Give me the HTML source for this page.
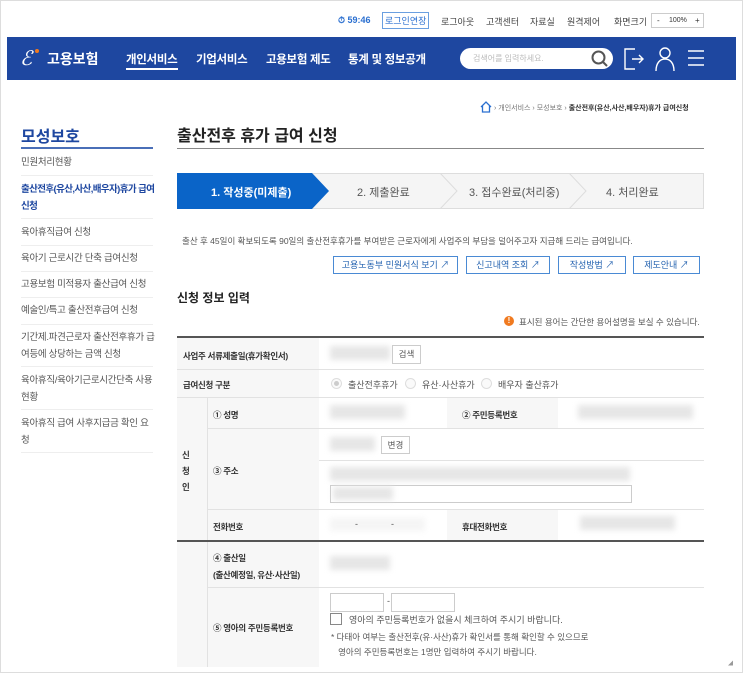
<!DOCTYPE html>
<html><head><meta charset="utf-8"><style>
*{margin:0;padding:0;box-sizing:border-box}
body{width:743px;height:673px;overflow:hidden;background:#fff;font-family:"Liberation Sans","Noto Sans CJK KR",sans-serif;color:#333;position:relative}
.a{position:absolute;white-space:nowrap}
.frame{position:absolute;left:0;top:0;width:743px;height:673px;border:1px solid #ddd}
.top{font-size:9px;color:#444;top:15px}
.nav{left:7px;top:37px;width:729px;height:43px;background:#1e47a0}
.nav .m{color:#fff;font-size:11.5px;font-weight:bold;top:14px;letter-spacing:-0.3px}
.side{font-size:9.5px;color:#555;left:21px;line-height:17px;width:134px;white-space:normal;letter-spacing:-0.3px}
.sl{position:absolute;left:21px;width:132px;height:1px;background:#eee}
.lab{background:#f7f7f7}
.t{font-size:8.5px;font-weight:bold;color:#333;letter-spacing:-0.3px}
.blur{position:absolute;background:#e6e6e6;filter:blur(3px)}
.btn{position:absolute;border:1px solid #4a8ad4;color:#2563b0;font-size:9px;height:18px;line-height:16px;text-align:center}
.box{position:absolute;border:1px solid #ccc;background:#fff}
.hl{position:absolute;height:1px;background:#e2e2e2}
.rad{position:absolute;width:11px;height:11px;border:1px solid #ddd;border-radius:50%;background:#fafafa}
.v{font-size:9px;color:#555}
</style></head><body>
<div class="frame"></div>
<div class="a top" style="left:338px;color:#2a6fd0;font-weight:bold">⏱ 59:46</div>
<div class="a top" style="left:382px;top:12px;border:1px solid #6a9fe0;color:#2a6fd0;padding:1px 2px">로그인연장</div>
<div class="a top" style="left:441px">로그아웃</div>
<div class="a top" style="left:486px">고객센터</div>
<div class="a top" style="left:530px">자료실</div>
<div class="a top" style="left:567px">원격제어</div>
<div class="a top" style="left:614px">화면크기</div>
<div class="a" style="left:651px;top:13px;width:53px;height:15px;border:1px solid #ccc;font-size:8px;line-height:13px;color:#333"><span style="position:absolute;left:5px">-</span><span style="position:absolute;left:17px;font-size:7px">100%</span><span style="position:absolute;left:43px">+</span></div>
<div class="a nav">
 <div class="a" style="left:13px;top:9px;color:#fff;font-size:20px;font-style:italic">ℰ</div>
 <div class="a" style="left:28px;top:12px;width:4px;height:4px;border-radius:50%;background:#f07a20"></div>
 <div class="a" style="left:40px;top:12px;color:#fff;font-size:14px;font-weight:bold">고용보험</div>
 <div class="a m" style="left:119px">개인서비스</div>
 <div class="a" style="left:119px;top:31px;width:52px;height:2px;background:#fff"></div>
 <div class="a m" style="left:189px">기업서비스</div>
 <div class="a m" style="left:259px">고용보험 제도</div>
 <div class="a m" style="left:341px">통계 및 정보공개</div>
 <div class="a" style="left:453px;top:11px;width:153px;height:21px;border-radius:11px;background:#fff"></div>
 <div class="a" style="left:466px;top:16px;font-size:8px;color:#bbb">검색어를 입력하세요.</div>
 <svg class="a" style="left:583px;top:12px" width="20" height="20" viewBox="0 0 20 20"><circle cx="8.5" cy="8.5" r="6" fill="none" stroke="#555" stroke-width="2"/><path d="M13 13l4 4" stroke="#555" stroke-width="2"/></svg>
 <svg class="a" style="left:616px;top:10px" width="22" height="24" viewBox="0 0 22 24" fill="none" stroke="#fff" stroke-width="1.4"><path d="M12 2H2v20h10M9 12h11M16 8l4 4-4 4"/></svg>
 <svg class="a" style="left:648px;top:9px" width="20" height="26" viewBox="0 0 20 26" fill="none" stroke="#fff" stroke-width="1.4"><circle cx="10" cy="7" r="5"/><path d="M1 25c0-8 4-12 9-12s9 4 9 12"/></svg>
 <svg class="a" style="left:680px;top:12px" width="18" height="18" viewBox="0 0 18 18" stroke="#fff" stroke-width="1.4"><path d="M1 2h16M1 9h16M1 16h16"/></svg>
</div>
<svg class="a" style="left:480px;top:101px" width="12" height="12" viewBox="0 0 12 12" fill="none" stroke="#2a6fd0" stroke-width="1.3"><path d="M1 6L6 1l5 5M2.5 5v6h7V5"/></svg>
<div class="a" style="left:494px;top:103px;font-size:7px;color:#777">› 개인서비스 › 모성보호 › <b style="color:#333">출산전후(유산,사산,배우자)휴가 급여신청</b></div>
<div class="a" style="left:21px;top:123px;font-size:16px;font-weight:bold;color:#1e47a0">모성보호</div>
<div class="a" style="left:21px;top:147px;width:132px;height:2px;background:#4a6fb8"></div>
<div class="a side" style="top:154px">민원처리현황</div><div class="sl" style="top:175px"></div>
<div class="a side" style="top:181px;color:#1e47a0;font-weight:bold;letter-spacing:-0.6px">출산전후(유산,사산,배우자)휴가 급여신청</div><div class="sl" style="top:218px"></div>
<div class="a side" style="top:224px">육아휴직급여 신청</div><div class="sl" style="top:245px"></div>
<div class="a side" style="top:250px">육아기 근로시간 단축 급여신청</div><div class="sl" style="top:271px"></div>
<div class="a side" style="top:276px">고용보험 미적용자 출산급여 신청</div><div class="sl" style="top:297px"></div>
<div class="a side" style="top:302px">예술인/특고 출산전후급여 신청</div><div class="sl" style="top:324px"></div>
<div class="a side" style="top:329px">기간제.파견근로자 출산전후휴가 급여등에 상당하는 금액 신청</div><div class="sl" style="top:366px"></div>
<div class="a side" style="top:372px">육아휴직/육아기근로시간단축 사용 현황</div><div class="sl" style="top:409px"></div>
<div class="a side" style="top:415px">육아휴직 급여 사후지급금 확인 요청</div><div class="sl" style="top:452px"></div>
<div class="a" style="left:177px;top:122px;font-size:16px;font-weight:bold;color:#222">출산전후 휴가 급여 신청</div>
<div class="a" style="left:177px;top:148px;width:527px;height:1px;background:#888"></div>
<div class="a" style="left:177px;top:173px;width:527px;height:36px;background:#f5f5f5;border:1px solid #ddd"></div>
<svg class="a" style="left:177px;top:173px" width="527" height="36"><path d="M0 0H135L152 18L135 36H0Z" fill="#0a64c8"/><path d="M263 0L280 18L263 36M392 0L409 18L392 36" fill="none" stroke="#ddd"/></svg>
<div class="a" style="left:211px;top:184px;font-size:11px;color:#fff;font-weight:bold">1. 작성중(미제출)</div>
<div class="a" style="left:357px;top:184px;font-size:11px;color:#555">2. 제출완료</div>
<div class="a" style="left:469px;top:184px;font-size:11px;color:#555">3. 접수완료(처리중)</div>
<div class="a" style="left:606px;top:184px;font-size:11px;color:#555">4. 처리완료</div>
<div class="a" style="left:182px;top:235px;font-size:8.5px;color:#555">출산 후 45일이 확보되도록 90일의 출산전후휴가를 부여받은 근로자에게 사업주의 부담을 덜어주고자 지급해 드리는 급여입니다.</div>
<div class="btn" style="left:333px;top:256px;width:125px">고용노동부 민원서식 보기 ↗</div>
<div class="btn" style="left:466px;top:256px;width:84px">신고내역 조회 ↗</div>
<div class="btn" style="left:558px;top:256px;width:68px">작성방법 ↗</div>
<div class="btn" style="left:633px;top:256px;width:67px">제도안내 ↗</div>
<div class="a" style="left:177px;top:289px;font-size:12px;font-weight:bold;color:#222">신청 정보 입력</div>
<div class="a" style="left:504px;top:316px;width:10px;height:10px;border-radius:50%;background:#f07a20;color:#fff;font-size:8px;line-height:10px;text-align:center;font-weight:bold">!</div>
<div class="a" style="left:519px;top:316px;font-size:8.5px;color:#555">표시된 용어는 간단한 용어설명을 보실 수 있습니다.</div>
<div class="a lab" style="left:177px;top:337px;width:142px;height:330px"></div>
<div class="a" style="left:207px;top:397px;width:112px;height:270px;background:#f7f7f7;border-left:1px solid #e2e2e2"></div>
<div class="a lab" style="left:447px;top:397px;width:111px;height:31px"></div>
<div class="a lab" style="left:447px;top:509px;width:111px;height:32px"></div>
<div class="a" style="left:177px;top:336px;width:527px;height:2px;background:#555"></div>
<div class="hl" style="left:177px;top:369px;width:527px"></div>
<div class="hl" style="left:177px;top:397px;width:527px"></div>
<div class="hl" style="left:207px;top:428px;width:497px"></div>
<div class="hl" style="left:319px;top:460px;width:385px"></div>
<div class="hl" style="left:207px;top:509px;width:497px"></div>
<div class="a" style="left:177px;top:540px;width:527px;height:2px;background:#555"></div>
<div class="hl" style="left:207px;top:587px;width:497px"></div>
<div class="a t" style="left:183px;top:350px">사업주 서류제출일(휴가확인서)</div>
<div class="blur" style="left:330px;top:346px;width:60px;height:14px"></div>
<div class="box" style="left:392px;top:345px;width:29px;height:19px;font-size:8.5px;text-align:center;line-height:17px;color:#555">검색</div>
<div class="a t" style="left:183px;top:379px">급여신청 구분</div>
<div class="rad" style="left:331px;top:378px"><div style="margin:2px;width:5px;height:5px;border-radius:50%;background:#ccc"></div></div>
<div class="a v" style="left:348px;top:378px">출산전후휴가</div>
<div class="rad" style="left:405px;top:378px"></div><div class="a v" style="left:422px;top:378px">유산·사산휴가</div>
<div class="rad" style="left:481px;top:378px"></div><div class="a v" style="left:498px;top:378px">배우자 출산휴가</div>
<div class="a t" style="left:182px;top:447px;line-height:16px;white-space:normal;width:10px">신<br>청<br>인</div>
<div class="a t" style="left:213px;top:409px">① 성명</div>
<div class="blur" style="left:330px;top:405px;width:75px;height:14px"></div>
<div class="a t" style="left:462px;top:409px">② 주민등록번호</div>
<div class="blur" style="left:578px;top:405px;width:115px;height:14px"></div>
<div class="a t" style="left:213px;top:465px">③ 주소</div>
<div class="blur" style="left:330px;top:437px;width:45px;height:14px"></div>
<div class="box" style="left:381px;top:436px;width:29px;height:18px;font-size:8.5px;text-align:center;line-height:16px;color:#555">변경</div>
<div class="blur" style="left:330px;top:467px;width:300px;height:14px"></div>
<div class="box" style="left:330px;top:485px;width:302px;height:18px"></div>
<div class="blur" style="left:333px;top:487px;width:60px;height:13px"></div>
<div class="a t" style="left:213px;top:521px">전화번호</div>
<div class="blur" style="left:330px;top:518px;width:95px;height:13px;opacity:.4"></div>
<div class="a v" style="left:355px;top:519px">-</div><div class="a v" style="left:391px;top:519px">-</div>
<div class="a t" style="left:462px;top:521px">휴대전화번호</div>
<div class="blur" style="left:580px;top:516px;width:95px;height:14px"></div>
<div class="a t" style="left:213px;top:552px">④ 출산일</div>
<div class="a t" style="left:213px;top:569px">(출산예정일, 유산·사산일)</div>
<div class="blur" style="left:330px;top:556px;width:60px;height:14px"></div>
<div class="a t" style="left:213px;top:622px">⑤ 영아의 주민등록번호</div>
<div class="box" style="left:330px;top:593px;width:54px;height:19px"></div>
<div class="a v" style="left:387px;top:596px">-</div>
<div class="box" style="left:391px;top:593px;width:64px;height:19px"></div>
<div class="box" style="left:330px;top:613px;width:12px;height:12px;border-color:#888"></div>
<div class="a v" style="left:349px;top:613px">영아의 주민등록번호가 없을시 체크하여 주시기 바랍니다.</div>
<div class="a" style="left:331px;top:630px;font-size:8.5px;color:#555;line-height:15px">* 다태아 여부는 출산전후(유·사산)휴가 확인서를 통해 확인할 수 있으므로<br>&nbsp;&nbsp;&nbsp;영아의 주민등록번호는 1명만 입력하여 주시기 바랍니다.</div>
<div class="a" style="left:728px;top:660px;font-size:5px;color:#999">◢</div>
</body></html>
